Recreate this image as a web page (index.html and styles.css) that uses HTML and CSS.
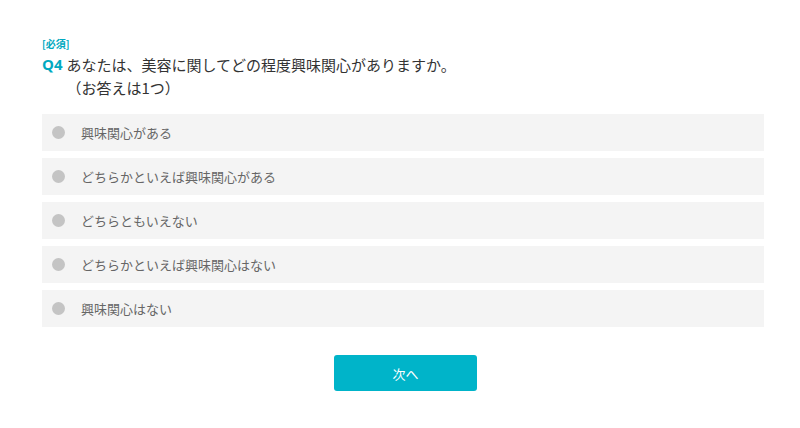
FILE: index.html
```html
<!DOCTYPE html>
<html lang="ja">
<head>
<meta charset="utf-8">
<link rel="stylesheet" href="styles.css">
</head>
<body>
<main class="survey">
  <div class="required">[必須]</div>
  <div class="question">
    <span class="qnum">Q4</span>
    <span class="qtext">あなたは、美容に関してどの程度興味関心がありますか。<br>（お答えは1つ）</span>
  </div>
  <ul class="options">
    <li class="option"><span class="radio"></span><span class="label">興味関心がある</span></li>
    <li class="option"><span class="radio"></span><span class="label">どちらかといえば興味関心がある</span></li>
    <li class="option"><span class="radio"></span><span class="label">どちらともいえない</span></li>
    <li class="option"><span class="radio"></span><span class="label">どちらかといえば興味関心はない</span></li>
    <li class="option"><span class="radio"></span><span class="label">興味関心はない</span></li>
  </ul>
  <div class="actions">
    <button class="next">次へ</button>
  </div>
</main>
</body>
</html>
```
FILE: styles.css
```css
html, body {
  margin: 0;
  padding: 0;
  background: #fff;
}
body {
  font-family: "Noto Sans CJK JP", "Noto Sans", sans-serif;
  color: #333;
}
.survey {
  width: 722px;
  margin: 0 0 0 42px;
  padding-top: 37px;
}
.required {
  font-size: 10px;
  line-height: 14px;
  color: #00a9c0;
  font-weight: bold;
}
.question {
  display: flex;
  font-size: 15px;
  line-height: 23px;
  margin-top: 2px;
}
.qnum {
  color: #00a9c0;
  font-weight: bold;
  margin-right: 4px;
  font-family: "Open Sans", "Noto Sans", sans-serif;
}
.qtext {
  color: #333;
}
.options {
  list-style: none;
  margin: 15px 0 0 0;
  padding: 0;
  display: flex;
  flex-direction: column;
  gap: 7px;
}
.option {
  background: #f4f4f4;
  height: 37px;
  display: flex;
  align-items: center;
  padding-left: 10px;
}
.radio {
  width: 13px;
  height: 13px;
  border-radius: 50%;
  background: #c4c4c4;
  flex: none;
}
.label {
  margin-left: 16px;
  font-size: 13px;
  color: #666;
}
.actions {
  display: flex;
  justify-content: center;
  margin-top: 28px;
  padding-left: 5px;
}
.next {
  width: 143px;
  height: 36px;
  border: none;
  border-radius: 3px;
  background: #00b4c9;
  color: #fff;
  font-family: "Noto Sans CJK JP", sans-serif;
  font-size: 13px;
}
```
